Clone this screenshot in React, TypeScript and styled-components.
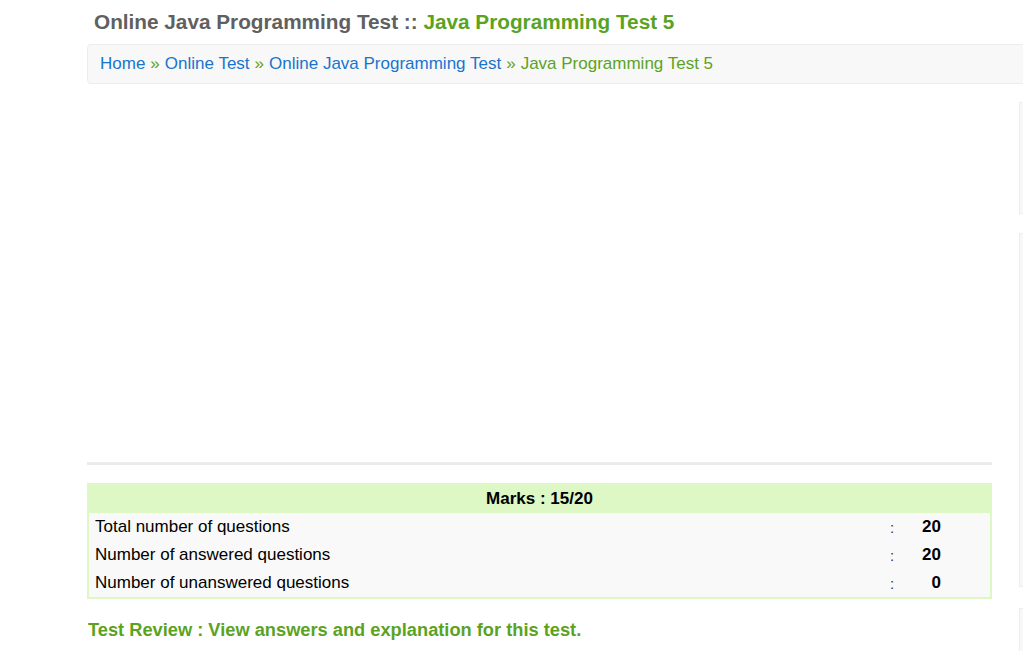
import React from "react";
import styled, {createGlobalStyle} from "styled-components";

const GlobalStyle = createGlobalStyle`
    html, body {
        margin: 0;
        padding: 0;
        background: #fff;
        overflow: hidden;
    }

    body {
        font-family: "Liberation Sans", Arial, sans-serif;
        color: #000;
    }
`;

const GREEN = "#5ba31f";
const BLUE = "#1874cd";
const LIGHT_GREEN = "#ddf7c5";

const Page = styled.div`
    width: 1200px;
    padding-left: 87px;
`;

const Title = styled.h1`
    margin: 11px 0 0;
    padding-left: 7px;
    font-size: 20.75px;
    line-height: 22px;
    font-weight: 700;
    color: #606060;
`;

const Accent = styled.span`
    color: ${GREEN};
`;

const Breadcrumb = styled.nav`
    margin-top: 11px;
    height: 38px;
    display: flex;
    align-items: center;
    padding: 0 12px;
    background: #f8f8f8;
    border: 1px solid #ededed;
    border-radius: 4px;
    font-size: 17px;
`;

const Crumb = styled.a<{ $current?: boolean }>`
    color: ${({$current}) => ($current ? GREEN : BLUE)};
    text-decoration: none;
`;

const Sep = styled.span`
    color: ${GREEN};
    margin: 0 5px;
`;

const Columns = styled.div`
    display: grid;
    grid-template-columns: 905px 1fr;
    column-gap: 27px;
`;

const Main = styled.main`
    display: flex;
    flex-direction: column;
`;

const AdSpace = styled.div`
    height: 378px;
`;

const Divider = styled.hr`
    margin: 0;
    height: 3px;
    border: none;
    background: #ebebeb;
`;

const ResultTable = styled.section`
    margin-top: 18px;
    border: 2px solid ${LIGHT_GREEN};
    background: #f9f9f9;
`;

const Header = styled.div`
    height: 28px;
    display: flex;
    align-items: center;
    justify-content: center;
    background: ${LIGHT_GREEN};
    font-size: 17px;
    font-weight: 700;
`;

const Row = styled.div`
    height: 28px;
    display: grid;
    grid-template-columns: 1fr 10px 41px;
    align-items: center;
    padding: 0 49px 0 6px;
    font-size: 17px;
`;

const Colon = styled.span`
    font-size: 15px;
    color: #333;
`;

const Value = styled.span`
    text-align: right;
    font-weight: 700;
`;

const Review = styled.a`
    display: block;
    margin-top: 20px;
    padding-left: 1px;
    font-size: 18.25px;
    line-height: 22px;
    font-weight: 700;
    color: ${GREEN};
    text-decoration: none;
`;

const Sidebar = styled.aside`
    display: flex;
    flex-direction: column;
    padding-top: 18px;
`;

const Panel = styled.div<{ $height: number; $gap: number }>`
    height: ${({$height}) => $height}px;
    margin-bottom: ${({$gap}) => $gap}px;
    background: #f8f8f8;
    border: 1px solid #ededed;
`;

const rows = [
    {label: "Total number of questions", value: 20},
    {label: "Number of answered questions", value: 20},
    {label: "Number of unanswered questions", value: 0},
];

export default function App(): React.JSX.Element {
    return (
        <>
            <GlobalStyle/>
            <Page>
                <Title>
                    Online Java Programming Test :: <Accent>Java Programming Test 5</Accent>
                </Title>
                <Breadcrumb>
                    <Crumb href="#">Home</Crumb>
                    <Sep>»</Sep>
                    <Crumb href="#">Online Test</Crumb>
                    <Sep>»</Sep>
                    <Crumb href="#">Online Java Programming Test</Crumb>
                    <Sep>»</Sep>
                    <Crumb $current>Java Programming Test 5</Crumb>
                </Breadcrumb>
                <Columns>
                    <Main>
                        <AdSpace/>
                        <Divider/>
                        <ResultTable>
                            <Header>Marks : 15/20</Header>
                            {rows.map((r) => (
                                <Row key={r.label}>
                                    <span>{r.label}</span>
                                    <Colon>:</Colon>
                                    <Value>{r.value}</Value>
                                </Row>
                            ))}
                        </ResultTable>
                        <Review href="#">Test Review : View answers and explanation for this test.</Review>
                    </Main>
                    <Sidebar>
                        <Panel $height={110} $gap={19}/>
                        <Panel $height={352} $gap={21}/>
                        <Panel $height={200} $gap={0}/>
                    </Sidebar>
                </Columns>
            </Page>
        </>
    );
}
